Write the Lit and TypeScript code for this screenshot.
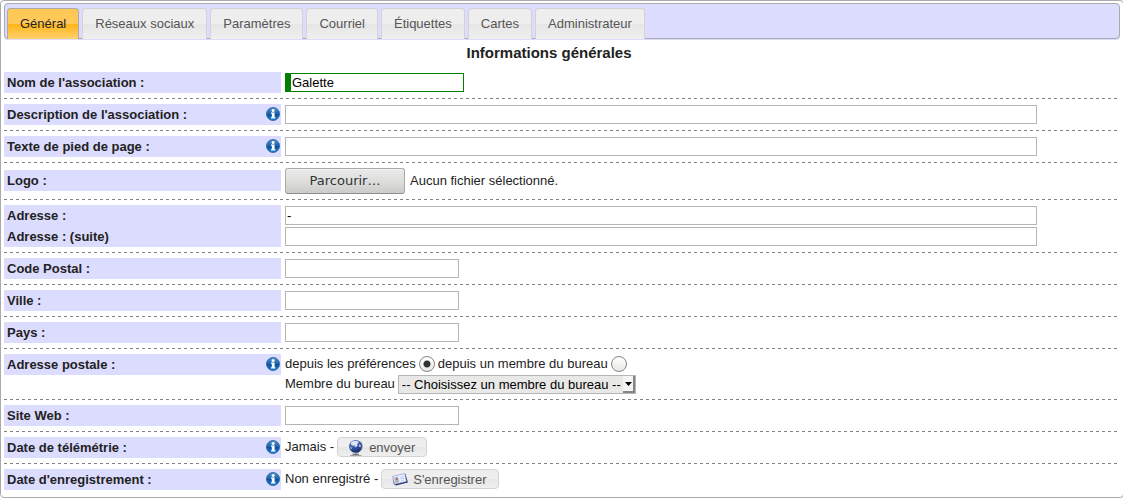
import { LitElement, html, css, svg, nothing } from "lit";
import { customElement, property, state } from "lit/decorators.js";
import { classMap } from "lit/directives/class-map.js";

const TABS = [
  ["general", "Général"],
  ["social", "Réseaux sociaux"],
  ["parameters", "Paramètres"],
  ["mail", "Courriel"],
  ["labels", "Étiquettes"],
  ["cards", "Cartes"],
  ["admin", "Administrateur"],
];

@customElement("info-icon")
export class InfoIcon extends LitElement {
  static styles = css`
    :host { display: block; width: 14px; height: 14px; }
    .icon { display: block; }
  `;
  render() {
    return html`<svg class="icon" width="14" height="14" viewBox="0 0 14 14" role="img" aria-label="Information">
      ${svg`<defs>
        <linearGradient id="g" x1="0" y1="0" x2="0" y2="1">
          <stop offset="0" stop-color="#5b93cb"></stop>
          <stop offset="0.48" stop-color="#1b62ad"></stop>
          <stop offset="0.52" stop-color="#0a4f9c"></stop>
          <stop offset="1" stop-color="#1f86d6"></stop>
        </linearGradient>
      </defs>
      <circle cx="7" cy="7" r="6.5" fill="url(#g)" stroke="#1f5a9c" stroke-width="0.8"></circle>
      <circle cx="7.1" cy="3.4" r="1.5" fill="#fff"></circle>
      <path d="M5 5.4H8.6V10.2H9.4V11.6H5V10.2H5.8V6.7H5Z" fill="#fff"></path>`}
    </svg>`;
  }
}

@customElement("form-row")
export class FormRow extends LitElement {
  @property({ type: Boolean }) info = false;
  static styles = css`
    :host {
      display: block;
      padding: 5px 0;
    }
    .row {
      display: grid;
      grid-template-columns: 277px minmax(0, 1fr);
      column-gap: 4px;
      align-items: start;
    }
    .head {
      display: flex;
      justify-content: space-between;
      box-sizing: border-box;
      padding: 0 1px 0 3px;
      background: #dcdcff;
      font-weight: bold;
      line-height: 21px;
    }
    :host([tall]) .head { margin-top: 2px; }
    .hint { margin-top: 3px; }
  `;
  render() {
    return html`<div class="row">
      <div class="head">
        <slot name="label"></slot>
        ${this.info ? html`<info-icon class="hint"></info-icon>` : nothing}
      </div>
      <slot></slot>
    </div>`;
  }
}

@customElement("app-root")
export class AppRoot extends LitElement {
  @state() private tab = "general";
  @state() private fileName = "";

  static styles = css`
    :host {
      display: block;
      overflow: hidden;
      color: #222;
      background: #fff;
      font: 13px/21px "Liberation Sans", Arial, sans-serif;
    }
    .panel {
      margin-right: -1px;
      padding: 2px 3px;
      border: 1px solid #aaa;
      border-radius: 4px;
    }
    .tabs {
      display: flex;
      gap: 3px;
      padding: 4px 2px 0;
      border: 1px solid #aaa;
      border-radius: 4px;
      background: #dcdcff;
      box-shadow: 0 1px #dcdcff;
    }
    .tab {
      margin-bottom: -1px;
      padding: 0 12px;
      border: 1px solid #d3d3d3;
      border-bottom: 0;
      border-radius: 4px 4px 0 0;
      background: linear-gradient(#eee 0 50%, #e6e6e6 50%, #efefef);
      color: #555;
      line-height: 30px;
      text-decoration: none;
    }
    .tab.active {
      border-color: #aaa;
      background: linear-gradient(#ffc754, #ffc95c 50%, #ffb515 50%, #ffd070);
      color: #222;
    }
    .title {
      margin: 0;
      padding: 4px 26px 4px 0;
      font-size: 15px;
      line-height: 20px;
      text-align: center;
    }
    .line {
      height: 1px;
      background: repeating-linear-gradient(90deg, #808080 0 3px, transparent 3px 6px);
    }
    .labels { display: flex; flex-direction: column; }
    .fields { display: grid; gap: 2px; padding: 1px 0; }
    .text {
      display: block;
      box-sizing: border-box;
      width: 174px;
      height: 19px;
      margin: 0;
      padding: 0 1px;
      border: 1px solid #b5b5b5;
      background: #fff;
      color: #000;
      font: inherit;
      line-height: 17px;
      outline: none;
    }
    .text.wide { width: 90%; }
    .text.required {
      width: 179px;
      border-color: green;
      border-left-width: 6px;
    }
    .file { display: flex; align-items: center; gap: 5px; line-height: 22px; }
    .browse {
      box-sizing: border-box;
      width: 120px;
      height: 26px;
      padding: 0 0 1px;
      border: 1px solid #a9aaa8;
      border-bottom-color: #8e8f8d;
      border-radius: 3px;
      background: linear-gradient(#eaeaea, #dededd 50%, #cbcbca);
      box-shadow: inset 0 1px #f4f4f4;
      color: #2e3436;
      font: 13px "DejaVu Sans", sans-serif;
    }
    .inline { display: flex; align-items: center; height: 20px; line-height: 20px; gap: 3px; }
    .radio {
      appearance: none;
      box-sizing: border-box;
      width: 16px;
      height: 16px;
      margin: 0;
      border: 1px solid #84857f;
      border-radius: 50%;
      background: linear-gradient(#fff, #e8e8e6);
    }
    .radio:checked {
      background: radial-gradient(circle, #2e3436 0 3px, transparent 4px), linear-gradient(#fff, #e8e8e6);
    }
    .picker { display: grid; height: 19px; }
    .select, .arrow { grid-area: 1 / 1; }
    .select {
      appearance: none;
      box-sizing: border-box;
      height: 19px;
      margin: 0;
      padding: 0 14px 0 3px;
      border: 1px solid #b5b5b5;
      border-radius: 0;
      background: #e8e8e6;
      color: #000;
      font: inherit;
      line-height: 17px;
    }
    .arrow { justify-self: end; align-self: center; margin-right: 1px; pointer-events: none; }
    .action {
      display: flex;
      align-items: center;
      box-sizing: border-box;
      height: 20px;
      padding: 1px 11px 0 10px;
      gap: 5px;
      border: 1px solid #d3d3d3;
      border-radius: 4px;
      background: linear-gradient(#eee 0 50%, #e7e7e7 50%, #eee);
      color: #555;
      font: inherit;
      line-height: 18px;
    }
    .glyph { display: block; }
  `;

  private line() {
    return html`<div class="line"></div>`;
  }

  private field(id: string, label: string, kind = "", info = false, value = "") {
    return html`<form-row ?info=${info}>
      <label slot="label" for=${id}>${label}</label>
      <div class="fields">
        <input id=${id} type="text" .value=${value}
          class=${classMap({ text: true, wide: kind === "wide", required: kind === "required" })}
          ?required=${kind === "required"} />
      </div>
    </form-row>`;
  }

  private browse() {
    (this.renderRoot.querySelector("#logo-file") as HTMLInputElement).click();
  }

  private picked(e: Event) {
    this.fileName = (e.target as HTMLInputElement).files?.[0]?.name ?? "";
  }

  render() {
    return html`<main class="panel">
      <nav class="tabs">
        ${TABS.map(([id, name]) => html`<a href="#${id}"
          class=${classMap({ tab: true, active: this.tab === id })}
          @click=${() => (this.tab = id)}>${name}</a>`)}
      </nav>
      <form @submit=${(e: Event) => e.preventDefault()}>
        <h1 class="title">Informations générales</h1>
        ${this.field("name", "Nom de l'association :", "required", false, "Galette")}
        ${this.line()}
        ${this.field("slogan", "Description de l'association :", "wide", true)}
        ${this.line()}
        ${this.field("footer", "Texte de pied de page :", "wide", true)}
        ${this.line()}
        <form-row tall>
          <label slot="label" for="logo">Logo :</label>
          <div class="file">
            <button id="logo" class="browse" type="button" @click=${this.browse}>Parcourir…</button>
            <input id="logo-file" type="file" hidden @change=${this.picked} />
            <span>${this.fileName || "Aucun fichier sélectionné."}</span>
          </div>
        </form-row>
        ${this.line()}
        <form-row>
          <div slot="label" class="labels">
            <label for="address">Adresse :</label>
            <label for="address2">Adresse : (suite)</label>
          </div>
          <div class="fields">
            <input id="address" class="text wide" type="text" .value=${"-"} />
            <input id="address2" class="text wide" type="text" />
          </div>
        </form-row>
        ${this.line()}
        ${this.field("zip", "Code Postal :")}
        ${this.line()}
        ${this.field("town", "Ville :")}
        ${this.line()}
        ${this.field("country", "Pays :")}
        ${this.line()}
        <form-row info>
          <span slot="label" id="postal">Adresse postale :</span>
          <div role="group" aria-labelledby="postal">
            <div class="inline">
              <label for="from-prefs">depuis les préférences</label>
              <input id="from-prefs" class="radio" type="radio" name="postal" checked />
              <label for="from-staff">depuis un membre du bureau</label>
              <input id="from-staff" class="radio" type="radio" name="postal" />
            </div>
            <div class="inline">
              <label for="staff">Membre du bureau</label>
              <span class="picker">
                <select id="staff" class="select">
                  <option>-- Choisissez un membre du bureau --</option>
                </select>
                <svg class="arrow" width="12" height="17" viewBox="0 0 12 17" aria-hidden="true">
                  <path d="M0 0H12V17H0Z" fill="#f4f4f2"></path>
                  <path d="M10 0H12V17H0V15H10Z" fill="#858583"></path>
                  <path d="M2 6H9L5.5 10Z" fill="#000"></path>
                </svg>
              </span>
            </div>
          </div>
        </form-row>
        ${this.line()}
        ${this.field("website", "Site Web :")}
        ${this.line()}
        <form-row info>
          <label slot="label" for="send">Date de télémétrie :</label>
          <div class="inline">
            <span>Jamais -</span>
            <button id="send" class="action" type="button">
              <svg class="glyph" width="16" height="16" viewBox="0 0 16 16" aria-hidden="true">
                <defs>
                  <radialGradient id="globe" cx="0.4" cy="0.25" r="0.8">
                    <stop offset="0" stop-color="#8fa9e0"></stop>
                    <stop offset="0.5" stop-color="#2f4f9f"></stop>
                    <stop offset="1" stop-color="#142766"></stop>
                  </radialGradient>
                </defs>
                <path d="M2 15.5H13.5" stroke="#a0a0a4" stroke-width="1"></path>
                <path d="M4.5 14.4H11M7.8 12.5V14.4" stroke="#77797f" stroke-width="1.2"></path>
                <path d="M12.6 1.5C16.2 5.5 14.5 11.5 8.5 13" fill="none" stroke="#a3a8b8" stroke-width="1"></path>
                <circle cx="7.6" cy="6.4" r="6.4" fill="url(#globe)"></circle>
                <path d="M3.2 2.2L5.8 0.9L9.4 1L11 2.6L9 4L9.6 5.4L7.6 7.2L6.4 5.2L4 5.6L2.8 4Z" fill="#dde6f6"></path>
                <path d="M11.2 4L13 5.2L12.4 7.6L10.8 6.4Z" fill="#b9c8e8"></path>
                <path d="M2 6.2L4.2 7.6L3.8 9.6L2.6 8.8Z" fill="#8fa6d8"></path>
              </svg>
              envoyer
            </button>
          </div>
        </form-row>
        ${this.line()}
        <form-row info>
          <label slot="label" for="register">Date d'enregistrement :</label>
          <div class="inline">
            <span>Non enregistré -</span>
            <button id="register" class="action" type="button">
              <svg class="glyph" width="16" height="16" viewBox="0 0 16 16" aria-hidden="true">
                <path d="M0.8 5L13.4 1.8L15.9 10.6L4 13.6L1.8 12Z" fill="#2b3376"></path>
                <path d="M0.6 4.4L12.8 1.6L14.4 9.4L2.6 12.2Z" fill="#eef3fd" stroke="#7f8cc6" stroke-width="0.6"></path>
                <path d="M2.2 5.6L6.2 4.7L7.4 10L3.4 10.9Z" fill="#8fc3ee"></path>
                <circle cx="4.7" cy="7" r="1.2" fill="#d9653c"></circle>
                <path d="M3.6 9.2L6.5 8.5L7 10.1L3.8 10.8Z" fill="#e9a27c"></path>
                <path d="M8 5.4L12 4.5M8.4 7L12.4 6.1M8.8 8.6L11.6 8" stroke="#b3c4ee" stroke-width="0.9"></path>
              </svg>
              S'enregistrer
            </button>
          </div>
        </form-row>
      </form>
    </main>`;
  }
}
